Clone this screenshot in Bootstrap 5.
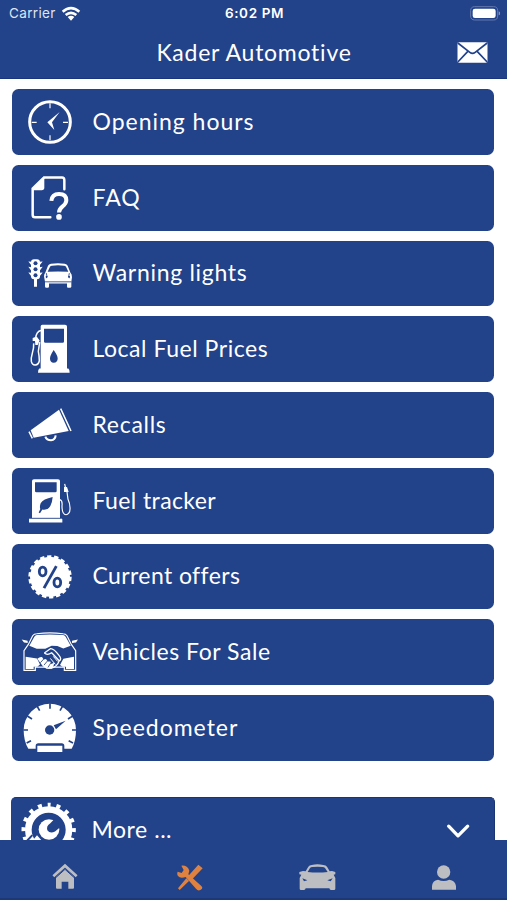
<!DOCTYPE html>
<html lang="en">
<head>
<meta charset="utf-8">
<meta name="viewport" content="width=device-width, initial-scale=1">
<title>Kader Automotive</title>
<link href="https://cdn.jsdelivr.net/npm/bootstrap@5.3.0/dist/css/bootstrap.min.css" rel="stylesheet">
<style>
:root{--brand:#22428a}
body{font-family:Lato,"Open Sans",sans-serif;background:#fff;color:#fff}
.phone{height:900px}
.brand-bg{background:var(--brand)}
.top-area{height:79px;border-bottom:1px solid #1a3580}
.status-row{height:27px;font-family:Inter,sans-serif;padding:0 7px 0 9px;font-size:13.5px}
.status-row>div{flex:1 1 0}
.carrier{letter-spacing:.35px;color:#dfe5f3}
.wifi{margin-left:1px}
.clock-text{font-weight:600;font-size:13.5px;letter-spacing:.6px}
.title-row{height:50px;padding-right:19px}
.title-text{font-size:23px;line-height:49px;letter-spacing:.75px;padding-left:4px}
.side{width:31px}
.menu-area{padding:10px 13.5px 0 12px;gap:10px;height:761px}
.tile{height:65.75px;flex:none;border-radius:6.5px;padding-left:8px;color:#fff;text-decoration:none;font-size:23px;letter-spacing:.54px}
.tile:hover{color:#fff}
.tile svg{width:60px;height:65.75px;flex:none}
.tile span{padding:0 0 2px 12.5px;line-height:30px}
.sp-wide{letter-spacing:.98px}
.sp-mid{letter-spacing:.7px}
.sp-tight{letter-spacing:.4px}
.tile.more{margin:26.5px -1.5px 0 -1px;border-radius:5px 5px 0 0;height:43px;padding-left:9px;border:1px solid #1a3474;border-bottom:0;border-left-width:0;padding-right:23px}
.more span{padding:21px 0 0 11.5px;line-height:20px}
.tile.more .gear{height:42px}
.tile.more .chevron{width:26px;height:42px}
.tab-area{height:60px;border-bottom:2px solid #1b3878}
.tab-area svg{display:block}
.w{fill:#fff}.b{fill:var(--brand)}
.ws{fill:none;stroke:#fff}.bs{fill:none;stroke:var(--brand)}
.g{fill:#bdbec2}.o{fill:#e0823f}
</style>
<script src="https://cdn.jsdelivr.net/npm/bootstrap@5.3.0/dist/js/bootstrap.bundle.min.js"></script>
</head>
<body class="overflow-hidden">
<div class="phone d-flex flex-column">
<header class="top-area brand-bg flex-shrink-0">
  <div class="status-row d-flex align-items-center">
    <div class="d-flex align-items-center gap-1"><span class="carrier">Carrier</span>
      <svg class="wifi" width="20" height="16" viewBox="183 15 60 48"><g class="ws" stroke-width="8"><path d="M188 32Q213 11 238 32"/><path d="M197 42Q213 29 229 42"/></g><path class="w" d="M203 48Q213 41 223 48L213 59Z"/></svg></div>
    <div class="text-center clock-text">6:02 PM</div>
    <div class="d-flex justify-content-end"><svg width="30" height="15" viewBox="651 17 90 45"><rect x="653" y="19" width="81" height="40" rx="12" fill="none" stroke="#6478ad" stroke-width="3"/><rect class="w" x="659" y="25" width="69" height="28" rx="7"/><path fill="#8192bd" d="M737 33q5 2 5 6t-5 6z"/></svg></div>
  </div>
  <div class="title-row d-flex align-items-center">
    <div class="side ms-3"></div>
    <div class="title-text flex-fill text-center">Kader Automotive</div>
    <svg class="side" height="21" viewBox="614 126 92 63"><rect class="w" x="615" y="127" width="90" height="61" rx="4"/><path class="bs" stroke-width="5" d="M616 129L652 157Q660 163 668 157L704 129M616 186L646 154M704 186L674 154"/></svg>
  </div>
</header>
<main class="menu-area d-flex flex-column flex-shrink-0">
  <a class="tile brand-bg d-flex align-items-center" href="#"><svg viewBox="60 27 180 197.25"><circle class="ws" cx="150" cy="126" r="61" stroke-width="9"/><path class="ws" stroke-width="3.500" d="M150 70v15M150 166v15M95 127h15M189 127h15"/><path class="w" d="M179 96L156 127L163 150L142 127Z"/></svg><span class="sp-wide">Opening hours</span></a>
  <a class="tile brand-bg d-flex align-items-center" href="#"><svg viewBox="60 254.25 180 197.25"><path class="ws" stroke-width="7.500" stroke-linecap="round" d="M151 411H105Q98 411 98 404V325L132 292H186Q193 292 193 300V327"/><path class="w" d="M96 326L133 290V322Q133 330 125 330H96Z"/><path class="ws" stroke-width="12" d="M154 362Q156 341 177 341Q199 341 199 360Q199 370 187 379Q177 387 177 397"/><circle class="w" cx="177" cy="410" r="8.500"/></svg><span class="sp-wide">FAQ</span></a>
  <a class="tile brand-bg d-flex align-items-center" href="#"><svg viewBox="60 16.5 180 197.25"><rect class="w" x="93" y="71" width="27" height="60" rx="9"/><path class="w" d="M102 128h9v26h-9zM85 78l10 1v12zM85 94l10 1v12zM85 111l10 1v12zM128 78l-10 1v12zM128 94l-10 1v12zM128 111l-10 1v12z"/><g class="b"><circle cx="106.500" cy="83" r="6"/><circle cx="106.500" cy="101" r="6"/><circle cx="106.500" cy="119" r="6"/></g><path class="w" d="M136 111L144 91Q146 86 153 85Q174 81 194 85Q201 86 203 91L211 111Q216 116 216 125L214 139V154Q214 157 210 157H204Q201 157 201 153V144H147V153Q147 157 143 157H139Q135 157 135 153V139L132 123Q132 115 136 111Z"/><path class="b" d="M143 109L150 94Q152 91 156 91Q174 88 192 91Q196 91 198 94L205 109Q174 107 143 109Z"/><path class="bs" stroke-width="2.500" d="M134 139H214M139 113Q142 120 139 128M208 113Q205 120 208 128"/><circle class="b" cx="140" cy="124" r="3"/><circle class="b" cx="207" cy="124" r="3"/></svg><span class="sp-mid">Warning lights</span></a>
  <a class="tile brand-bg d-flex align-items-center" href="#"><svg viewBox="60 243.75 180 197.25"><path class="w" d="M122 275Q122 270 127 270H195Q201 270 201 275V401H205Q209 404 209 414H114Q114 404 118 401H122Z"/><path class="b" d="M132 282H192V320Q192 324 188 324H136Q132 324 132 320ZM161 346Q173 363 173 371Q173 383 161 384Q150 383 150 371Q150 363 161 346Z"/><path class="ws" stroke-width="4.500" d="M123 287Q109 289 106 313M101 326C103 350 91 361 94 380C97 395 115 394 118 378Q118 365 115 350L119 322"/><path class="w" d="M98 310L110 305L119 317L113 331H106L105 319H98Z"/></svg><span>Local Fuel Prices</span></a>
  <a class="tile brand-bg d-flex align-items-center" href="#"><svg viewBox="60 21 180 197.25"><path class="w" d="M92 136L177 74L206 138L101 158Z"/><path class="ws" stroke-width="4.500" d="M182 71L213 138M87 140L97 160"/><path class="ws" stroke-width="6" d="M136 155Q140 166 153 166Q166 164 167 151"/></svg><span class="sp-mid">Recalls</span></a>
  <a class="tile brand-bg d-flex align-items-center" href="#"><svg viewBox="60 248.25 180 197.25"><path class="w" d="M96 287Q96 282 102 282H174Q180 282 180 287V398H96ZM89 400H184Q187 400 187 403V412H87V403Q87 400 89 400Z"/><path class="b" d="M105 291H170V317Q170 321 166 321H109Q105 321 105 317ZM158 335Q129 341 122 354Q118 365 121 371L116 382L120 384L127 373Q142 376 151 362Q157 350 158 335Z"/><path class="bs" stroke-width="2" d="M89 399H185"/><path class="ws" stroke-width="3.500" d="M180 343Q188 346 186 362C186 400 210 391 210 372Q211 357 204 342L201 320M197 309L194 296"/><path class="w" d="M192 305H201L206 320H192Z"/></svg><span class="sp-tight">Fuel tracker</span></a>
  <a class="tile brand-bg d-flex align-items-center" href="#"><svg viewBox="60 25.500 180 197.25"><circle class="w" cx="150" cy="124" r="60"/><circle class="ws" cx="150" cy="124" r="61" stroke-width="8" stroke-dasharray="13 8.290"/><g class="bs" stroke-width="8.500"><ellipse cx="128" cy="108" rx="10" ry="13"/><ellipse cx="172" cy="141" rx="10" ry="13"/><path d="M169 92L132 158"/></g></svg><span class="sp-tight">Current offers</span></a>
  <a class="tile brand-bg d-flex align-items-center" href="#"><svg viewBox="60 252.75 180 197.25"><path class="ws" stroke-width="3.500" d="M72 407V348L85 329L98 303Q102 297 110 297Q150 292 189 297Q197 297 201 303L214 329L227 348V407H193V397H106V407Z"/><path class="w" d="M88 333L103 306Q106 302 111 301Q150 298 189 301Q194 302 197 306L212 333L190 341L172 334L155 333L136 342L110 342ZM77 366L111 371L120 389L112 396H101V403H77ZM222 366L190 372L180 391L188 396H198V403H222ZM65 314L83 318V325L72 323ZM234 314L216 318V325L228 323Z"/><path class="ws" stroke-width="4" stroke-linejoin="round" d="M133 355L151 342Q160 340 177 362Q187 374 177 379Q172 395 153 401L145 391M133 355Q142 363 155 354L177 377"/><path class="w" d="M112 372Q120 365 126 367L131 374L138 373L143 380L151 380L153 388L163 384L160 395Q155 402 148 403L139 402L128 394Z"/><path class="bs" stroke-width="2.500" d="M121 384L131 373M132 391L142 379M144 398L152 385"/><path class="ws" stroke-width="3" d="M151 371L166 389M160 365L173 380"/></svg><span>Vehicles For Sale</span></a>
  <a class="tile brand-bg d-flex align-items-center" href="#"><svg viewBox="60 15 180 197.25"><path class="w" d="M85 176Q71 154 71 120A78 78 0 0 1 228 120Q228 154 215 176H193V168Q193 160 185 160H115Q107 160 107 168V176ZM112 167H187V186H112Z"/><path class="bs" stroke-width="5" d="M150 40V56M111 48L119 62M188 48L180 62M82 78L96 87M218 78L204 87M70 120H84M216 120H230M80 159L93 152M219 159L206 152"/><circle class="b" cx="149" cy="120" r="14"/><path class="b" d="M161 106L197 92L168 118Z"/></svg><span class="sp-wide">Speedometer</span></a>
  <a class="tile more brand-bg d-flex align-items-start" href="#"><svg class="gear" viewBox="60 325.500 180 126"><circle class="ws" cx="146" cy="421" r="61" stroke-width="20"/><circle class="ws" cx="146" cy="421" r="75" stroke-width="13" stroke-dasharray="12 17.450" stroke-dashoffset="6" transform="rotate(-90 146 421)"/><circle class="w" cx="147" cy="420" r="31"/><path class="b" d="M164 388L151 401Q138 409 142 422Q150 434 165 426L183 411Z"/><path class="w" d="M98 453L111 437L125 453Z"/><path class="bs" stroke-width="6" d="M80 455L97 437"/></svg><span>More ...</span>
    <svg class="ms-auto chevron" viewBox="885 53.500 78 126"><path class="ws" stroke-width="10" stroke-linecap="round" stroke-linejoin="round" d="M896 138L924 167L953 138"/></svg></a>
</main>
<nav class="tab-area brand-bg d-flex flex-shrink-0">
  <a href="#" class="col-3 d-flex justify-content-center align-items-center pt-3 ps-1"><svg width="28" height="28" viewBox="152 524 84 84"><path class="g" d="M167 566L194 541L221 566V598Q221 601 218 601H204V580H184V601H170Q167 601 167 598Z"/><path fill="none" stroke="#bdbec2" stroke-width="8" d="M159 564L194 532L229 564"/><path class="bs" stroke-width="3" d="M163 571L194 543L225 571"/></svg></a>
  <a href="#" class="col-3 d-flex justify-content-center align-items-center pt-3"><svg width="28" height="28" viewBox="81 251 84 84"><path class="o" d="M86 277L98 281L104 272L97 259Q115 257 121 274L118 285L157 320Q164 327 154 332Q147 336 141 328L110 293Q94 299 87 290Q83 285 86 277ZM148 256L161 267L128 301L117 291ZM87 327L112 297L120 305L92 332Z"/></svg></a>
  <a href="#" class="col-3 d-flex justify-content-center align-items-center pt-3"><svg width="38" height="28" viewBox="445 249 114 84"><path class="g" d="M468 274L476 260Q479 255 486 255Q503 251 521 255Q529 255 532 260L540 274L547 273L557 276V283L552 284L557 294V326Q557 330 553 330H544Q540 330 539 325H468Q467 330 463 330H454Q450 330 450 326V294L455 284L449 283V276L460 273Z"/><path class="b" d="M474 276L481 264Q483 261 489 261Q504 259 518 261Q524 261 526 264L534 276Q504 279 474 276ZM458 295L473 301L463 304ZM549 295L533 301L543 304Z"/></svg></a>
  <a href="#" class="col-3 d-flex justify-content-center align-items-center pt-3"><svg width="28" height="28" viewBox="840 251 84 84"><circle class="g" cx="881" cy="278" r="20"/><path class="g" d="M846 331V320Q847 304 864 301Q881 309 898 301Q916 304 918 320V331Z"/></svg></a>
</nav>
</div>
</body>
</html>
